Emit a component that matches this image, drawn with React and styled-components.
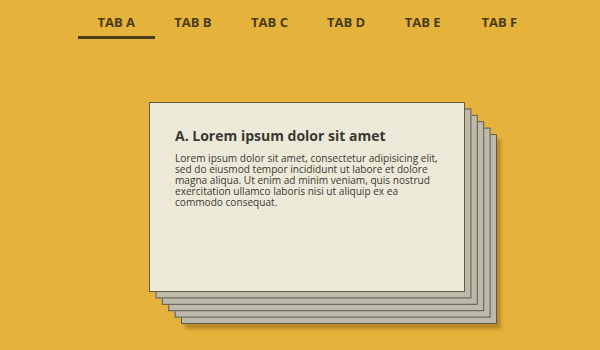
import React from "react";
import styled, { createGlobalStyle } from "styled-components";

const Global = createGlobalStyle`
  html, body { margin: 0; padding: 0; background: #e5b23c; }
  body { font-family: "Open Sans", "Liberation Sans", sans-serif; width: 600px; height: 350px; overflow: hidden; }
`;

const Page = styled.div`
  display: flex;
  flex-direction: column;
  width: 600px;
  height: 350px;
`;

const Nav = styled.nav`
  display: flex;
  padding-left: 78px;
  height: 39px;
`;

const Tab = styled.div`
  width: 76.6px;
  box-sizing: border-box;
  display: flex;
  align-items: center;
  justify-content: center;
  padding-top: 7px;
  font-size: 13px;
  font-weight: 700;
  color: #4a3c19;
  border-bottom: 3px solid ${(p) => (p.$active ? "#4a3c19" : "transparent")};
`;

const Stage = styled.div`
  padding-top: 63px;
  padding-left: 149px;
`;

const Stack = styled.div`
  position: relative;
  width: 316px;
  height: 190px;
`;

const BackCard = styled.div`
  position: absolute;
  left: 0;
  top: 0;
  width: 316px;
  height: 190px;
  box-sizing: border-box;
  background: #bdbaab;
  border: 1px solid #5f5a47;
  box-shadow: ${(p) => (p.$last ? "4px 5px 3px rgba(130, 90, 10, 0.45)" : "none")};
`;

const Card = styled.div`
  position: relative;
  width: 316px;
  height: 190px;
  box-sizing: border-box;
  background: #ede9d8;
  border: 1px solid #625c45;
  padding: 23px 18px 0 25px;
`;

const Title = styled.h2`
  margin: 0 0 8px;
  font-size: 14px;
  line-height: 19px;
  font-weight: 700;
  color: #3a3832;
`;

const Body = styled.p`
  margin: 0;
  font-size: 10.1px;
  line-height: 11px;
  color: #3b3a33;
`;

const tabs = ["TAB A", "TAB B", "TAB C", "TAB D", "TAB E", "TAB F"];

export default function App() {
  const backs = [5, 4, 3, 2, 1];
  return (
    <Page>
      <Global />
      <Nav>
        {tabs.map((t, i) => (
          <Tab key={t} $active={i === 0}>{t}</Tab>
        ))}
      </Nav>
      <Stage>
        <Stack>
          {backs.map((n) => (
            <BackCard
              key={n}
              $last={n === 5}
              style={{ transform: `translate(${n * 6.4}px, ${n * 6.4}px)` }}
            />
          ))}
          <Card>
            <Title>A. Lorem ipsum dolor sit amet</Title>
            <Body>
              Lorem ipsum dolor sit amet, consectetur adipisicing elit, sed do eiusmod tempor
              incididunt ut labore et dolore magna aliqua. Ut enim ad minim veniam, quis nostrud
              exercitation ullamco laboris nisi ut aliquip ex ea commodo consequat.
            </Body>
          </Card>
        </Stack>
      </Stage>
    </Page>
  );
}
